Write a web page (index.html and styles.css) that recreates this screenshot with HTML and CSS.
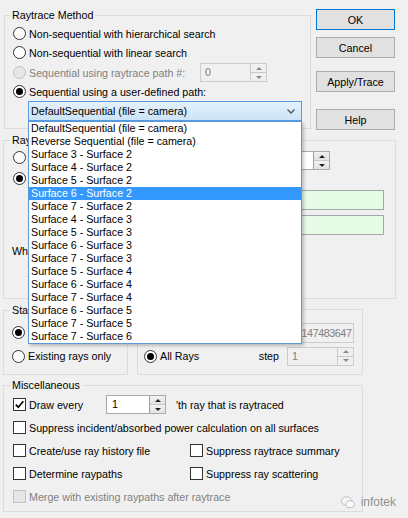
FILE: index.html
```html
<!DOCTYPE html>
<html lang="en">
<head>
  <meta charset="UTF-8" />
  <title>Raytrace Options</title>
  <link rel="stylesheet" href="styles.css">
</head>
<body>
  <div class="dialog">
    <div class="top-row">
      <fieldset class="group method">
        <legend>Raytrace Method</legend>
        <div class="opt"><span class="radio"></span>Non-sequential with hierarchical search</div>
        <div class="opt"><span class="radio"></span>Non-sequential with linear search</div>
        <div class="opt path-row disabled">
          <span class="radio"></span><span class="path-label">Sequential using raytrace path #:</span>
          <span class="spin path-spin"><span class="val">0</span><span class="arrows"><i class="up"></i><i class="dn"></i></span></span>
        </div>
        <div class="opt"><span class="radio on"></span>Sequential using a user-defined path:</div>
        <div class="combo">
          <span class="combo-text">DefaultSequential (file = camera)</span>
          <svg class="chevron" width="8" height="5" viewBox="0 0 8 5"><polyline points="0.5,0.5 4,4 7.5,0.5" fill="none" stroke="#555" stroke-width="1.4"/></svg>
          <ul class="combo-list">
            <li>DefaultSequential (file = camera)</li>
            <li>Reverse Sequential (file = camera)</li>
            <li>Surface 3 - Surface 2</li>
            <li>Surface 4 - Surface 2</li>
            <li>Surface 5 - Surface 2</li>
            <li class="selected">Surface 6 - Surface 2</li>
            <li>Surface 7 - Surface 2</li>
            <li>Surface 4 - Surface 3</li>
            <li>Surface 5 - Surface 3</li>
            <li>Surface 6 - Surface 3</li>
            <li>Surface 7 - Surface 3</li>
            <li>Surface 5 - Surface 4</li>
            <li>Surface 6 - Surface 4</li>
            <li>Surface 7 - Surface 4</li>
            <li>Surface 6 - Surface 5</li>
            <li>Surface 7 - Surface 5</li>
            <li>Surface 7 - Surface 6</li>
          </ul>
        </div>
      </fieldset>

      <div class="buttons">
        <button class="btn default">OK</button>
        <button class="btn cancel">Cancel</button>
        <button class="btn apply">Apply/Trace</button>
        <button class="btn help">Help</button>
      </div>
    </div>

    <fieldset class="group rays">
      <legend>Ray</legend>
      <div class="opt src-row">
        <span class="radio"></span>
        <span class="spin src-spin"><span class="val"></span><span class="arrows"><i class="up"></i><i class="dn"></i></span></span>
      </div>
      <div class="opt"><span class="radio on"></span></div>
      <div class="field-row first"><span class="field green"></span></div>
      <div class="field-row"><span class="field green"></span></div>
      <div class="note">Wh</div>
    </fieldset>

    <div class="bottom-row">
      <fieldset class="group start">
        <legend>Sta</legend>
        <div class="opt"><span class="radio on"></span></div>
        <div class="opt second"><span class="radio"></span>Existing rays only</div>
      </fieldset>

      <fieldset class="group range">
        <div class="opt range-row disabled">
          <span class="field num">2147483647</span>
        </div>
        <div class="opt all-row">
          <span class="radio on"></span>All Rays
          <span class="step">step</span>
          <span class="spin step-spin dis"><span class="val">1</span><span class="arrows"><i class="up"></i><i class="dn"></i></span></span>
        </div>
      </fieldset>
    </div>

    <fieldset class="group misc">
      <legend>Miscellaneous</legend>
      <div class="opt">
        <span class="check on"><svg width="11" height="11" viewBox="0 0 11 11"><path d="M1.8 5.6 L4.3 8.2 L9.3 2.2" fill="none" stroke="#000" stroke-width="1.7"/></svg></span>
        <span class="draw-label">Draw every</span>
        <span class="spin draw-spin"><span class="val">1</span><span class="arrows"><i class="up"></i><i class="dn"></i></span></span>
        <span class="after-spin">'th ray that is raytraced</span>
      </div>
      <div class="opt"><span class="check"></span>Suppress incident/absorbed power calculation on all surfaces</div>
      <div class="opt">
        <span class="col"><span class="check"></span>Create/use ray history file</span>
        <span class="check"></span>Suppress raytrace summary
      </div>
      <div class="opt">
        <span class="col"><span class="check"></span>Determine raypaths</span>
        <span class="check"></span>Suppress ray scattering
      </div>
      <div class="opt disabled"><span class="check"></span>Merge with existing raypaths after raytrace</div>
    </fieldset>

    <div class="watermark">
      <svg width="14" height="13" viewBox="0 0 14 13">
        <ellipse cx="5.5" cy="5" rx="5" ry="4.2" fill="#f7f7f7" stroke="#b8b8b8" stroke-width="0.9"/>
        <ellipse cx="9" cy="8.2" rx="4.2" ry="3.5" fill="#fbfbfb" stroke="#b8b8b8" stroke-width="0.9"/>
      </svg>
      <span>infotek</span>
    </div>
  </div>
</body>
</html>
```

FILE: styles.css
```css
/* Classic Windows dialog look */
* {
  box-sizing: border-box;
}

body {
  margin: 0;
  background: #f0f0f0;
  font-family: "Liberation Sans", Arial, sans-serif;
  font-size: 10.7px;
  color: #000;
}

.dialog {
  position: relative;
  width: 408px;
  height: 518px;
  overflow: hidden;
  padding: 8px 0 0 3px;
}

/* Group boxes */
.group {
  margin: 0;
  padding: 0;
  border: 1px solid #dcdcdc;
  min-width: 0;
}

.group legend {
  margin-left: -3px;
  padding: 0 2px;
  line-height: 14px;
}

.top-row {
  display: flex;
  align-items: flex-start;
}

.method {
  margin-left: 1px;
  width: 307px;
  height: 121px;
  padding: 2px 0 0 8px;
}

/* Radio / checkbox rows */
.opt {
  display: flex;
  align-items: center;
  height: 19px;
  white-space: nowrap;
}

.radio {
  position: relative;
  flex: none;
  width: 13px;
  height: 13px;
  margin-right: 3px;
  border: 1px solid #333;
  border-radius: 50%;
  background: #fff;
}

.radio.on::after {
  content: "";
  position: absolute;
  left: 2px;
  top: 2px;
  width: 7px;
  height: 7px;
  border-radius: 50%;
  background: #000;
}

.check {
  flex: none;
  display: inline-flex;
  align-items: center;
  justify-content: center;
  width: 13px;
  height: 13px;
  margin-right: 3px;
  border: 1px solid #333;
  background: #fff;
}

.disabled {
  color: #808080;
}

.disabled .radio,
.disabled .check {
  border-color: #c2c2c2;
  background: #e6e6e6;
}

/* Spin boxes */
.spin {
  flex: none;
  display: flex;
  height: 19px;
  border: 1px solid #a9a9a9;
  background: #fff;
}

.spin .val {
  flex: 1;
  padding-left: 4px;
  line-height: 17px;
}

.spin .arrows {
  width: 16px;
  display: flex;
  flex-direction: column;
  border-left: 1px solid #a0a0a0;
}

.spin .arrows i {
  flex: 1;
  display: flex;
  align-items: center;
  justify-content: center;
  background: linear-gradient(#f2f2f2, #e2e2e2);
}

.spin .arrows i + i {
  border-top: 1px solid #c8c8c8;
}

.spin .up::before {
  content: "";
  border: 3px solid transparent;
  border-top: 0;
  border-bottom: 3px solid #222;
}

.spin .dn::before {
  content: "";
  border: 3px solid transparent;
  border-bottom: 0;
  border-top: 3px solid #222;
}

.disabled .spin,
.spin.dis {
  border-color: #cccccc;
  background: #f0f0f0;
  color: #808080;
}

.disabled .spin .arrows,
.spin.dis .arrows {
  border-left-color: #cccccc;
}

.disabled .spin .arrows i,
.spin.dis .arrows i {
  background: #f0f0f0;
}

.disabled .spin .up::before,
.spin.dis .up::before {
  border-bottom-color: #8a8a8a;
}

.disabled .spin .dn::before,
.spin.dis .dn::before {
  border-top-color: #8a8a8a;
}

.path-row {
  margin-top: 1px;
}

.path-label {
  width: 171px;
}

.path-spin {
  width: 67px;
}

/* Drop-down path selector */
.combo {
  position: relative;
  z-index: 10;
  display: flex;
  align-items: center;
  justify-content: space-between;
  width: 274px;
  height: 20px;
  margin-left: 15px;
  padding: 0 6px 0 2px;
  border: 1px solid #569de5;
  background: linear-gradient(#e5f1fb, #cce4f7);
}

.combo-list {
  position: absolute;
  left: -1px;
  top: 19px;
  width: 274px;
  margin: 0;
  padding: 0;
  list-style: none;
  border: 1px solid #5b9ad8;
  background: #fff;
  box-shadow: 2px 2px 3px rgba(0, 0, 0, 0.22);
}

.combo-list li {
  height: 13px;
  line-height: 13px;
  padding-left: 2px;
  white-space: nowrap;
}

.combo-list li.selected {
  background: #3399ff;
  color: #fff;
}

/* Command buttons */
.buttons {
  display: flex;
  flex-direction: column;
  margin-left: 5px;
}

.btn {
  width: 79px;
  height: 21px;
  padding: 0;
  border: 1px solid #adadad;
  background: #e1e1e1;
  font: inherit;
  color: #000;
}

.btn.default {
  margin-top: 1px;
  border-color: #0078d7;
}

.btn.cancel {
  margin-top: 7px;
}

.btn.apply {
  margin-top: 13px;
}

.btn.help {
  margin-top: 17px;
}

/* Ray group, mostly under the open list */
.rays {
  width: 393px;
  height: 166px;
  margin-top: 3px;
  padding: 0 0 0 9px;
}

.rays .opt {
  height: 20px;
}

.rays .opt + .opt {
  margin-top: 1px;
}

.src-spin {
  width: 68px;
  margin-left: auto;
  margin-right: 65px;
  align-self: flex-start;
  margin-top: 4px;
}

.field-row {
  display: flex;
  justify-content: flex-end;
  height: 20px;
  margin-right: 11px;
  margin-top: 5px;
}

.field-row.first {
  margin-top: 2px;
}

.field {
  display: block;
  height: 20px;
  border: 1px solid #a6a6a6;
  background: #fff;
}

.field.green {
  width: 240px;
  background: #e6fbe6;
}

.note {
  margin: 8px 0 0 -1px;
  line-height: 16px;
}

/* Bottom row groups */
.bottom-row {
  display: flex;
  align-items: flex-start;
  margin-top: 4px;
}

.start {
  width: 125px;
  height: 72px;
  padding: 5px 0 0 8px;
}

.start legend {
  margin-left: -2px;
}

.start .opt {
  height: 20px;
}

.start .opt.second {
  margin-top: 4px;
}

.range {
  width: 226px;
  height: 66px;
  margin: 6px 0 0 9px;
  padding: 13px 8px 0 6px;
}

.range .opt {
  height: 20px;
}

.field.num {
  width: 67px;
  height: 20px;
  margin-left: auto;
  padding-left: 8px;
  line-height: 18px;
  letter-spacing: -0.4px;
  overflow: hidden;
  white-space: nowrap;
  border-color: #cccccc;
  background: #f0f0f0;
  color: #808080;
}

.all-row {
  margin-top: 3px;
}

.step {
  margin-left: auto;
  margin-right: 8px;
}

.step-spin {
  width: 67px;
}

/* Miscellaneous group */
.misc {
  width: 360px;
  height: 134px;
  margin-top: 3px;
  padding: 1px 0 0 9px;
}

.misc .opt {
  height: 23px;
}

.draw-label {
  width: 77px;
}

.draw-spin {
  width: 60px;
  height: 19px;
}

.draw-spin .val {
  padding-left: 5px;
}

.after-spin {
  margin-left: 10px;
}

.col {
  display: flex;
  align-items: center;
  width: 177px;
}

/* Corner mark */
.watermark {
  position: absolute;
  right: 12px;
  bottom: 9px;
  display: flex;
  align-items: center;
  gap: 6px;
  color: #8c8c8c;
  font-size: 12px;
  text-shadow: 0 0 2px #fff;
}
```
